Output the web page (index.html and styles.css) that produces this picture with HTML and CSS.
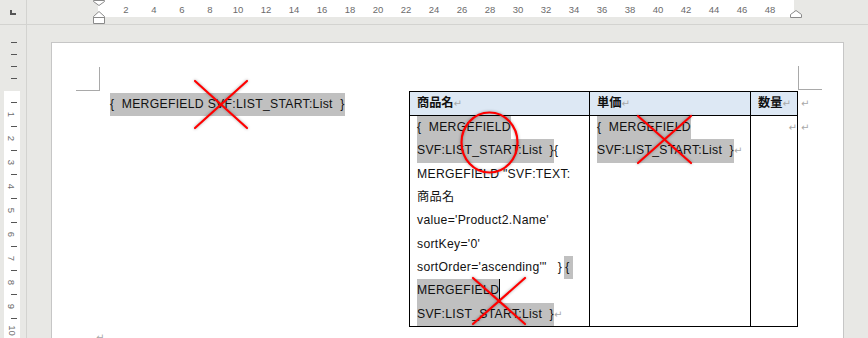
FILE: index.html
```html
<!DOCTYPE html>
<html lang="ja">
<head>
<meta charset="utf-8">
<title>Word - MERGEFIELD</title>
<link rel="stylesheet" href="styles.css">
</head>
<body>
<div class="app">
  <div class="corner"><span class="tabsel"></span></div>
  <div class="hruler">
    <div class="strip">
      <span>2</span><span>4</span><span>6</span><span>8</span><span>10</span><span>12</span><span>14</span><span>16</span><span>18</span><span>20</span><span>22</span><span>24</span><span>26</span><span>28</span><span>30</span><span>32</span><span>34</span><span>36</span><span>38</span><span>40</span><span>42</span><span>44</span><span>46</span><span>48</span>
    </div>
    <svg class="indent" width="14" height="25" viewBox="0 0 14 25">
      <path d="M1.5 0.5 H12.5 V1.5 L7 5.5 L1.5 1.5 Z" fill="#fff" stroke="#8a8a8a"/>
      <path d="M7 11.5 L12.5 16.5 V23.5 H1.5 V16.5 Z" fill="#fff" stroke="#8a8a8a"/>
      <path d="M1.5 17.5 H12.5" stroke="#8a8a8a"/>
    </svg>
    <svg class="rindent" width="14" height="10" viewBox="0 0 14 10">
      <path d="M7 1.5 L12.5 5.5 V8.5 H1.5 V5.5 Z" fill="#fff" stroke="#8a8a8a"/>
    </svg>
  </div>
  <div class="vruler">
    <div class="vstrip">
      <div class="tk"></div><div class="tk"></div><div class="tk"></div><div class="tk"></div>
      <div class="blank"></div>
      <div class="tk"></div><div class="num"><span>1</span></div>
      <div class="tk"></div><div class="num"><span>2</span></div>
      <div class="tk"></div><div class="num"><span>3</span></div>
      <div class="tk"></div><div class="num"><span>4</span></div>
      <div class="tk"></div><div class="num"><span>5</span></div>
      <div class="tk"></div><div class="num"><span>6</span></div>
      <div class="tk"></div><div class="num"><span>7</span></div>
      <div class="tk"></div><div class="num"><span>8</span></div>
      <div class="tk"></div><div class="num"><span>9</span></div>
      <div class="tk"></div><div class="num"><span>10</span></div>
    </div>
  </div>
  <div class="doc">
    <div class="page">
      <i class="crop crop-tl"></i>
      <i class="crop crop-tr"></i>
      <div class="body">
        <div class="lead"><span class="f">{&nbsp; MERGEFIELD SVF:LIST_START:List &nbsp;}</span></div>
        <div class="tablewrap">
          <div class="tbl">
            <div class="c h">商品名<span class="pm">↵</span></div>
            <div class="c h">単価<span class="pm">↵</span></div>
            <div class="c h c3">数量<span class="pm">↵</span></div>
            <div class="c b">
              <div class="ln"><span class="f">{&nbsp; MERGEFIELD </span></div>
              <div class="ln"><span class="f">SVF:LIST_START:List &nbsp;}</span>{</div>
              <div class="ln">MERGEFIELD "SVF:TEXT:</div>
              <div class="ln">商品名</div>
              <div class="ln">value='Product2.Name'</div>
              <div class="ln">sortKey='0'</div>
              <div class="ln">sortOrder='ascending'" &nbsp;&nbsp;}<span class="f brace">{</span></div>
              <div class="ln"><span class="f cur">MERGEFIELD </span></div>
              <div class="ln"><span class="f">SVF:LIST_START:List &nbsp;}</span><span class="pm">↵</span></div>
            </div>
            <div class="c b">
              <div class="ln"><span class="f">{&nbsp; MERGEFIELD </span></div>
              <div class="ln"><span class="f">SVF:LIST_START:List &nbsp;}</span><span class="pm">↵</span></div>
            </div>
            <div class="c b c3">
              <div class="ln right"><span class="pm">↵</span></div>
            </div>
          </div>
          <div class="rowmarks">
            <div class="rm1"><span class="pm">↵</span></div>
            <div class="rm2"><span class="pm">↵</span></div>
          </div>
        </div>
      </div>
      <div class="after"><span class="pm">↵</span></div>
    </div>
  </div>
  <svg class="marks" width="868" height="338" viewBox="0 0 868 338">
    <g stroke="#ff0000" stroke-width="2.2" fill="none" stroke-linecap="round">
      <line x1="195" y1="81" x2="247" y2="128"/>
      <line x1="247" y1="81" x2="195" y2="128"/>
      <ellipse cx="489.5" cy="142.5" rx="28" ry="30"/>
      <line x1="638" y1="116" x2="691" y2="163"/>
      <line x1="691" y1="116" x2="638" y2="163"/>
      <line x1="473" y1="278" x2="525" y2="324"/>
      <line x1="525" y1="278" x2="473" y2="324"/>
    </g>
  </svg>
</div>
</body>
</html>
```
FILE: styles.css
```css
* {
  box-sizing: border-box;
  margin: 0;
  padding: 0;
}

html, body {
  width: 868px;
  height: 338px;
  overflow: hidden;
}

body {
  background: #e8e8e5;
  font-family: "Liberation Sans", "Noto Sans CJK JP", sans-serif;
  color: #111;
}

.app {
  position: relative;
  display: grid;
  grid-template-columns: 27px 1fr;
  grid-template-rows: 25px 1fr;
  width: 868px;
  height: 338px;
  background: #e8e8e5;
}

/* top-left corner with tab selector */
.corner {
  border-right: 1px solid #d3d3d0;
  border-bottom: 1px solid #d3d3d0;
  padding: 10px 0 0 10px;
}

.tabsel {
  display: block;
  width: 6px;
  height: 5px;
  border-left: 2px solid #555;
  border-bottom: 2px solid #555;
}

/* horizontal ruler */
.hruler {
  position: relative;
  border-bottom: 1px solid #d3d3d0;
}

.strip {
  margin-left: 71px;
  width: 696px;
  height: 17px;
  background: #fff;
  display: flex;
  padding-left: 14px;
  font-size: 9.5px;
  color: #6b6b6b;
}

.strip span {
  width: 28px;
  text-align: center;
  line-height: 19px;
}

.indent {
  position: absolute;
  left: 65px;
  top: 0;
}

.rindent {
  position: absolute;
  left: 762px;
  top: 9px;
}

/* vertical ruler */
.vruler {
  border-right: 1px solid #d3d3d0;
}

.vstrip {
  margin-left: 4px;
  width: 16px;
  height: 100%;
  padding-top: 11px;
  background: linear-gradient(to bottom, transparent 66px, #fff 66px);
}

.tk, .blank, .num {
  height: 12px;
  display: flex;
  align-items: center;
  justify-content: center;
}

.tk::before {
  content: "";
  width: 6px;
  height: 1px;
  margin-left: 3px;
  background: #555;
}

.num {
  font-size: 9.5px;
  color: #6b6b6b;
}

.num span {
  display: block;
  transform: rotate(90deg);
}

/* document area */
.doc {
  padding: 17px 0 0 24px;
  overflow: hidden;
}

.page {
  position: relative;
  width: 793px;
  height: 330px;
  background: #fff;
  border: 1px solid #c6c6c6;
  border-bottom: none;
  padding: 48px 0 0 48px;
}

.crop {
  position: absolute;
  width: 24px;
  height: 24px;
  border-bottom: 1px solid #a9a9a9;
}

.crop-tl {
  left: 24px;
  top: 24px;
  border-right: 1px solid #a9a9a9;
}

.crop-tr {
  left: 746px;
  top: 23px;
  border-left: 1px solid #a9a9a9;
}

.body {
  display: flex;
  font-size: 12.2px;
  letter-spacing: 0.3px;
}

.lead {
  width: 309px;
  padding: 2px 0 0 10px;
}

.f {
  background: #c0c0c0;
}

.lead .f {
  display: inline-block;
  height: 23px;
  line-height: 23px;
}

.tablewrap {
  display: flex;
}

.tbl {
  display: grid;
  grid-template-columns: 180px 161px 47px;
  border-left: 1px solid #000;
  border-top: 1px solid #000;
}

.c {
  border-right: 1px solid #000;
  border-bottom: 1px solid #000;
  padding: 0 7px;
}

.c3 {
  padding: 0 0 0 7px;
}

.h {
  height: 24px;
  line-height: 23px;
  background: #dde8f4;
  font-weight: bold;
  letter-spacing: 0;
  white-space: nowrap;
}

.b {
  height: 211px;
}

.ln {
  height: 23.33px;
  line-height: 23.33px;
  white-space: nowrap;
}

.ln .f {
  display: inline-block;
  height: 100%;
}

.ln .brace {
  margin-left: 2px;
  padding: 0 3px 0 1px;
}

.cur {
  border-right: 1px solid #000;
}

.right {
  text-align: right;
}

.pm {
  color: #a8a8a8;
  font-size: 10px;
  font-weight: normal;
  letter-spacing: 0;
  font-family: "DejaVu Sans", sans-serif;
}

.rowmarks {
  padding: 1px 0 0 3px;
}

.rm1 {
  height: 24px;
  line-height: 23px;
}

.rm2 {
  height: 23.33px;
  line-height: 23.33px;
}

.after {
  height: 20px;
  line-height: 20px;
  margin-left: -4px;
  font-size: 12px;
}

.marks {
  position: absolute;
  left: 0;
  top: 0;
  pointer-events: none;
  filter: drop-shadow(0 0 1.5px rgba(0, 0, 0, 0.35));
}
```
